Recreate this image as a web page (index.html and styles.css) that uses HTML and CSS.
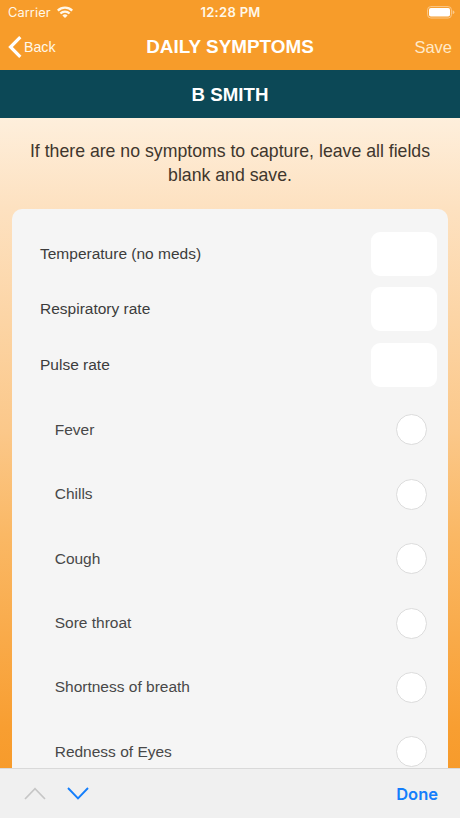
FILE: index.html
```html
<!DOCTYPE html>
<html lang="en">
<head>
<meta charset="utf-8">
<title>Daily Symptoms</title>
<link rel="stylesheet" href="styles.css">
</head>
<body>
<div class="screen">
  <header class="top">
    <div class="status">
      <div class="carrier"><span class="carrier-name">Carrier</span>
        <svg class="wifi" width="16" height="12" viewBox="0 0 16 12" fill="none" stroke="#fff8e9" stroke-width="2.4"><path d="M.8 4.6a10.2 10.2 0 0 1 14.4 0M3.4 7.5a6.5 6.5 0 0 1 9.2 0"/><path d="M8 12 5.4 9.5a3.7 3.7 0 0 1 5.2 0Z" fill="#fff8e9" stroke="none"/></svg>
      </div>
      <span class="clock">12:28 PM</span>
      <svg class="battery" width="28" height="13" viewBox="0 0 28 13"><rect x=".6" y=".6" width="23.8" height="11.4" rx="3.2" fill="none" stroke="#fbc98a"/><rect x="2" y="2" width="21" height="8.6" rx="1.8" fill="#fff"/><path d="M25.7 4.3q1.7.6 1.7 2t-1.7 2z" fill="#fbc98a"/></svg>
    </div>
    <nav class="nav">
      <div class="back"><svg width="14" height="22" viewBox="0 0 14 22" fill="none" stroke="#fff" stroke-width="3.2"><path d="M12.3 1.2 2.5 11l9.8 9.8"/></svg><span class="back-text">Back</span></div>
      <h1 class="title">DAILY SYMPTOMS</h1>
      <span class="save">Save</span>
    </nav>
  </header>
  <h2 class="patient"><span>B SMITH</span></h2>
  <main class="content">
    <p class="intro">If there are no symptoms to capture, leave all fields<br>blank and save.</p>
    <section class="card">
      <div class="field"><span>Temperature (no meds)</span><i class="input"></i></div>
      <div class="field"><span>Respiratory rate</span><i class="input"></i></div>
      <div class="field"><span>Pulse rate</span><i class="input"></i></div>
      <div class="checks">
        <div class="check"><span>Fever</span><i class="radio"></i></div>
        <div class="check"><span>Chills</span><i class="radio"></i></div>
        <div class="check"><span>Cough</span><i class="radio"></i></div>
        <div class="check"><span>Sore throat</span><i class="radio"></i></div>
        <div class="check"><span>Shortness of breath</span><i class="radio"></i></div>
        <div class="check"><span>Redness of Eyes</span><i class="radio"></i></div>
      </div>
    </section>
  </main>
  <footer class="toolbar">
    <div class="arrows">
      <svg width="22" height="13" viewBox="0 0 22 13" fill="none" stroke="#c6c6c6" stroke-width="1.7"><path d="M1 12 11 1.7 21 12"/></svg>
      <svg width="22" height="13" viewBox="0 0 22 13" fill="none" stroke="#147efb" stroke-width="1.9"><path d="M1 1 11 11.3 21 1"/></svg>
    </div>
    <span class="done">Done</span>
  </footer>
</div>
</body>
</html>
```

FILE: styles.css
```css
* { box-sizing: border-box; }
body { margin: 0; font-family: "Liberation Sans", Arial, sans-serif; color: #3c3c3c; }
.screen { width: 460px; height: 818px; display: flex; flex-direction: column; overflow: hidden; }
.top { height: 70px; flex: none; background: #f79c2a; color: #fff8e9; }
.status { height: 24px; padding: 0 5px 0 8px; display: grid; grid-template-columns: 1fr auto 1fr; align-items: center; font-family: Inter, sans-serif; font-size: 13px; }
.carrier { display: flex; align-items: center; gap: 6px; }
.carrier-name { font-size: 12.8px; letter-spacing: .1px; }
.wifi { margin-top: -1px; }
.clock { font-weight: 600; letter-spacing: .3px; position: relative; left: -1px; }
.battery { justify-self: end; }
.nav { height: 46px; padding: 0 8px; display: grid; grid-template-columns: 1fr auto 1fr; align-items: center; }
.back { display: flex; align-items: center; gap: 2px; font-size: 14.2px; }
.title { margin: 0; font-size: 18.9px; line-height: 22px; color: #fff; }
.save { justify-self: end; font-size: 16.5px; color: #ffe9c8; }
.patient { height: 48.4px; flex: none; margin: 0; padding-top: 1px; display: flex; align-items: center; justify-content: center; background: #0c4856; color: #fff; font-size: 18.7px; }
.content { flex: 1; min-height: 0; overflow: hidden; padding: 20.8px 12px 0; background: linear-gradient(#feefdc 0%, #fde1c0 14%, #fbc88a 48%, #fab865 64%, #f89e31 94%, #f79b2b 100%); }
.intro { margin: 0 0 22px; text-align: center; font-size: 17.7px; line-height: 24px; color: #40362d; white-space: nowrap; }
.card { height: 620px; padding: 22.6px 11px 0 28px; border-radius: 10px; background: #f5f5f5; font-size: 15.5px; }
.field { height: 44px; margin-bottom: 11.5px; display: flex; align-items: center; justify-content: space-between; }
.input { width: 66px; height: 44px; border-radius: 9px; background: #fff; }
.checks { margin-top: -.6px; padding: 0 10px 0 14.7px; color: #484848; }
.check { height: 64.4px; display: flex; align-items: center; justify-content: space-between; }
.radio { width: 31px; height: 31px; border: 1px solid #dcdcdc; border-radius: 50%; background: #fff; }
.toolbar { height: 50px; flex: none; padding: 0 22px 0 24px; border-top: 1.5px solid #d9d9d9; background: #f0f0f0; display: flex; align-items: center; justify-content: space-between; }
.arrows { display: flex; gap: 21px; }
.done { font-family: Inter, sans-serif; font-size: 16.5px; font-weight: 600; color: #147efb; }
```
